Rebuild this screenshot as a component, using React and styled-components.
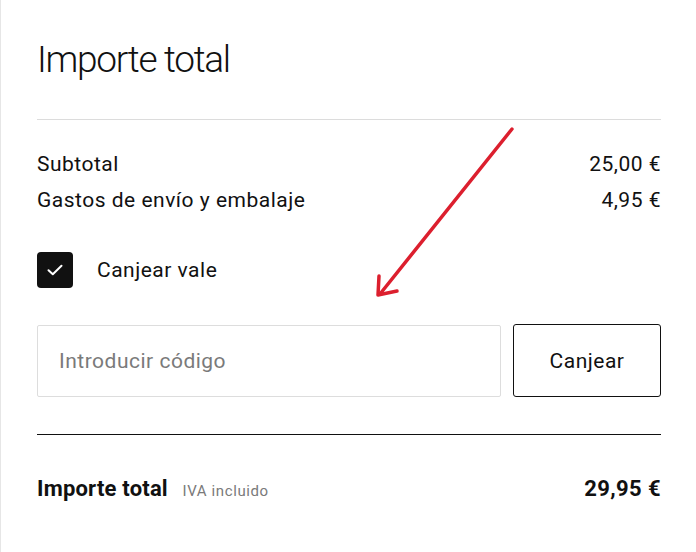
import styled, { createGlobalStyle } from "styled-components";

const GlobalStyle = createGlobalStyle`
    html, body {
        margin: 0;
        padding: 0;
        background: #ffffff;
    }
    body {
        font-family: Roboto, "Liberation Sans", sans-serif;
        color: #111111;
    }
`;

export default function App() {
    return (
        <>
            <GlobalStyle />
            <Panel>
                <Title>Importe total</Title>
                <Divider />

                <Lines>
                    <Line>
                        <span>Subtotal</span>
                        <span>25,00 €</span>
                    </Line>
                    <Line>
                        <span>Gastos de envío y embalaje</span>
                        <span>4,95 €</span>
                    </Line>
                </Lines>

                <CheckRow>
                    <Box>
                        <svg width="16" height="12" viewBox="0 0 16 12" fill="none">
                            <path d="M1.5 6.2 L5.8 10.2 L14.5 1.8" stroke="#ffffff" strokeWidth="2" strokeLinecap="round" strokeLinejoin="round" />
                        </svg>
                    </Box>
                    <CheckLabel>Canjear vale</CheckLabel>
                </CheckRow>

                <VoucherRow>
                    <CodeInput placeholder="Introducir código" />
                    <RedeemButton>Canjear</RedeemButton>
                </VoucherRow>

                <Divider dark />

                <TotalRow>
                    <TotalLabel>
                        Importe total <small>IVA incluido</small>
                    </TotalLabel>
                    <TotalValue>29,95 €</TotalValue>
                </TotalRow>

                <Arrow width="150" height="185" viewBox="0 0 150 185" fill="none">
                    <path d="M140 8 L8 173" stroke="#dc1f2e" strokeWidth="3.5" strokeLinecap="round" />
                    <path d="M7 155 L6 174 L25 170" stroke="#dc1f2e" strokeWidth="3.5" strokeLinecap="round" strokeLinejoin="round" />
                </Arrow>
            </Panel>
        </>
    );
}

const Panel = styled.div`
    position: relative;
    box-sizing: border-box;
    width: 696px;
    height: 552px;
    padding: 37px 35px 0 36px;
    border-left: 1px solid #e6e6e6;
`

const Title = styled.h1`
    margin: 0;
    font-size: 37px;
    line-height: 46px;
    font-weight: 300;
    letter-spacing: -1.3px;
`

const Divider = styled.div`
    height: 1px;
    background: ${props => props.dark ? "#111111" : "#dcdcdc"};
    margin: ${props => props.dark ? "37px 0 38px" : "36px 0 26px"};
`

const Lines = styled.div`
    display: flex;
    flex-direction: column;
`

const Line = styled.div`
    display: flex;
    justify-content: space-between;
    font-size: 21px;
    line-height: 36px;
    letter-spacing: 0.5px;
`

const CheckRow = styled.label`
    display: flex;
    align-items: center;
    gap: 24px;
    margin-top: 34px;
`

const Box = styled.span`
    width: 36px;
    height: 36px;
    border-radius: 4px;
    background: #111111;
    display: flex;
    align-items: center;
    justify-content: center;
`

const CheckLabel = styled.span`
    font-size: 21px;
    letter-spacing: 0.5px;
`

const VoucherRow = styled.div`
    display: flex;
    gap: 12px;
    margin-top: 37px;
`

const CodeInput = styled.input`
    flex: 1;
    box-sizing: border-box;
    height: 72px;
    padding: 0 21px;
    border: 1px solid #dddddd;
    border-radius: 2px;
    font-family: Roboto, "Liberation Sans", sans-serif;
    font-size: 21px;
    letter-spacing: 0.5px;
    color: #111111;
    outline: none;

    &::placeholder {
        color: #7a7a7a;
    }
`

const RedeemButton = styled.button`
    box-sizing: border-box;
    width: 148px;
    height: 73px;
    margin-top: -1px;
    background: #ffffff;
    border: 1px solid #111111;
    border-radius: 3px;
    font-family: Roboto, "Liberation Sans", sans-serif;
    font-size: 21px;
    letter-spacing: 0.5px;
    color: #111111;
    cursor: pointer;
`

const TotalRow = styled.div`
    display: flex;
    justify-content: space-between;
    align-items: baseline;
    line-height: 32px;
`

const TotalLabel = styled.div`
    font-size: 22px;
    font-weight: 700;
    letter-spacing: 0.2px;

    small {
        margin-left: 9px;
        font-size: 15px;
        font-weight: 400;
        letter-spacing: 0.6px;
        color: #7a7a7a;
    }
`

const TotalValue = styled.div`
    font-size: 22px;
    font-weight: 700;
    letter-spacing: 0.4px;
`

const Arrow = styled.svg`
    position: absolute;
    left: 371px;
    top: 121px;
    pointer-events: none;
`
